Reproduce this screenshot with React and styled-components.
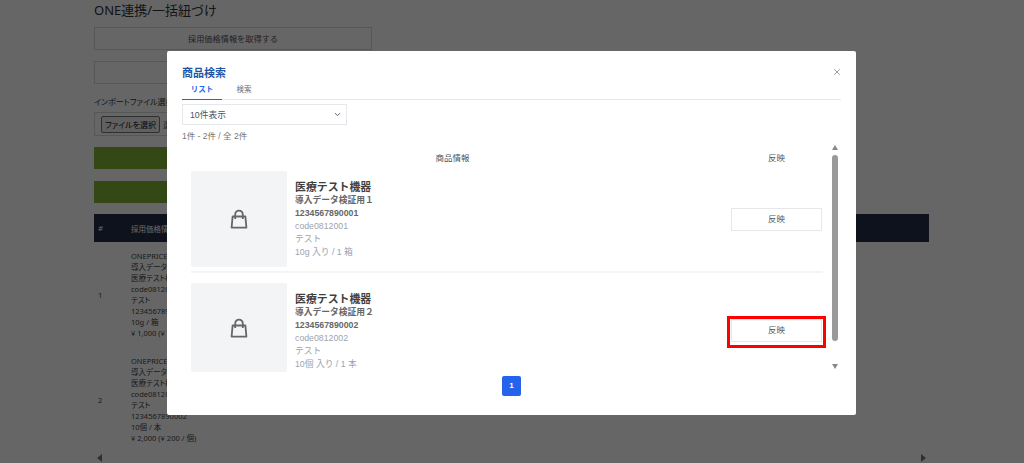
import React from "react";
import styled, { createGlobalStyle } from "styled-components";
import { X, ChevronDown } from "lucide-react";

const Global = createGlobalStyle`
  html, body { margin: 0; padding: 0; height: 463px; overflow: hidden; background: #fff; }
  body { font-family: "Noto Sans", "Noto Sans CJK JP", sans-serif; color: #374151; }
  * { box-sizing: border-box; }
`;

const Page = styled.div`
  width: 1024px;
  height: 463px;
  padding: 0 95px 0 94px;
  overflow: hidden;
`;
const PageTitle = styled.h1`
  margin: 0;
  height: 27px;
  font-size: 13px;
  font-weight: 400;
  line-height: 20px;
  color: #333;
`;
const OutlineBar = styled.div`
  width: 278px;
  height: 23px;
  margin-bottom: 11px;
  border: 1px solid #d9d9d9;
  font-size: 8.2px;
  line-height: 21px;
  text-align: center;
  color: #555;
`;
const ImportLabel = styled.div`
  font-size: 8px;
  line-height: 13px;
  color: #333;
  font-feature-settings: "palt";
`;
const FileBox = styled.div`
  width: 278px;
  height: 24px;
  margin: 4px 0 11px;
  padding: 3px 6px;
  border: 1px solid #d9d9d9;
  display: flex;
  align-items: center;
  gap: 3px;
  font-size: 8px;
  color: #555;
  font-feature-settings: "palt";
`;
const FileButton = styled.span`
  padding: 0 3px;
  height: 17px;
  line-height: 15px;
  border: 1px solid #767676;
  border-radius: 2px;
  background: #efefef;
  color: #111;
  white-space: nowrap;
`;
const GreenGroup = styled.div`
  display: flex;
  flex-direction: column;
  gap: 12px;
  margin-bottom: 11px;
`;
const GreenBar = styled.div`
  width: 278px;
  height: 22px;
  background: #7fb432;
`;
const TableHead = styled.div`
  height: 28px;
  background: #252f46;
  display: flex;
  align-items: center;
  color: #fff;
  font-size: 7.5px;
`;
const HashCell = styled.span`
  width: 37px;
  padding-left: 4px;
  font-style: italic;
`;
const Row = styled.div`
  height: 105px;
  display: flex;
  align-items: center;
  font-size: 7.5px;
  color: #444;
  font-feature-settings: "palt";
`;
const NumCell = styled.span`
  width: 37px;
  padding-left: 4px;
`;
const RowLines = styled.div`
  line-height: 11px;
  white-space: nowrap;
`;
const ScrollRow = styled.div`
  display: flex;
  justify-content: space-between;
  padding: 0 3px;
  margin-top: 2px;
`;
const ArrowLeft = styled.span`
  width: 0;
  height: 0;
  border-style: solid;
  border-width: 4px 5px 4px 0;
  border-color: transparent #777 transparent transparent;
`;
const ArrowRight = styled(ArrowLeft)`
  border-width: 4px 0 4px 5px;
  border-color: transparent transparent transparent #777;
`;

const Overlay = styled.div`
  position: fixed;
  inset: 0;
  background: rgba(0, 0, 0, 0.6);
  padding: 51px 0 0 167px;
`;
const Modal = styled.div`
  position: relative;
  width: 689px;
  height: 364px;
  background: #fff;
  border-radius: 2px;
  padding: 15px 15px 0;
  font-family: "Liberation Sans", "Noto Sans CJK JP", sans-serif;
`;
const ModalTitle = styled.h2`
  margin: 0;
  font-size: 11px;
  line-height: 15px;
  font-weight: 700;
  color: #1e56a8;
`;
const CloseButton = styled.span`
  position: absolute;
  top: 16px;
  right: 14px;
  display: flex;
  color: #888;
`;
const Tabs = styled.div`
  display: flex;
  height: 19px;
  border-bottom: 1px solid #e5e7eb;
`;
const Tab = styled.span`
  width: ${(p) => (p.$active ? "40px" : "44px")};
  height: 19px;
  padding-top: 3px;
  text-align: center;
  font-size: 7.5px;
  line-height: 12px;
  font-weight: ${(p) => (p.$active ? 700 : 400)};
  color: ${(p) => (p.$active ? "#2563eb" : "#6b7280")};
  border-bottom: ${(p) => (p.$active ? "1px solid #2563eb" : "none")};
`;
const SelectBox = styled.div`
  width: 165px;
  height: 21px;
  margin-top: 4px;
  padding: 0 4px 0 7px;
  display: flex;
  align-items: center;
  justify-content: space-between;
  border: 1px solid #e5e7eb;
  font-size: 8.75px;
  color: #4b5563;
`;
const Count = styled.div`
  margin-top: 5px;
  font-size: 8.5px;
  line-height: 12px;
  color: #777;
`;
const ListWrap = styled.div`
  display: flex;
  height: 231px;
`;
const List = styled.div`
  width: 647px;
  overflow: hidden;
`;
const ListHead = styled.div`
  display: flex;
  height: 29px;
  align-items: center;
  font-size: 8.5px;
  color: #4b5563;
`;
const HeadInfo = styled.span`
  width: 541px;
  text-align: center;
`;
const HeadAction = styled.span`
  width: 91px;
  margin-left: 8px;
  text-align: center;
`;
const Item = styled.div`
  display: flex;
  align-items: flex-start;
  margin-left: 9px;
  width: 632px;
  height: ${(p) => p.$h}px;
  padding-top: ${(p) => p.$pt}px;
  border-bottom: ${(p) => (p.$line ? "2px solid #f3f4f6" : "none")};
`;
const Thumb = styled.div`
  width: 96px;
  height: ${(p) => p.$h}px;
  flex: none;
  display: flex;
  align-items: center;
  justify-content: center;
  background: #f3f4f6;
  border-radius: 2px;
  color: #666;
`;
const Info = styled.div`
  flex: 1;
  padding: 10px 0 0 8px;
`;
const ItemName = styled.div`
  font-size: 10.9px;
  line-height: 13px;
  font-weight: 700;
  color: #404040;
`;
const Line = styled.div`
  font-size: 8.75px;
  line-height: 13px;
  font-weight: ${(p) => (p.$bold ? 700 : 400)};
  color: ${(p) => (p.$bold ? "#666" : "#9ca3af")};
`;
const ActionCell = styled.div`
  position: relative;
  width: 91px;
  flex: none;
  margin: ${(p) => p.$mt}px 1px 0 0;
`;
const ReflectButton = styled.div`
  height: 23px;
  border: 1px solid #e5e7eb;
  font-size: 8.5px;
  line-height: 21px;
  text-align: center;
  color: #4b5563;
`;
const Highlight = styled.span`
  position: absolute;
  inset: -3px -4px -6px -4px;
  border: 3px solid #f00;
`;
const ScrollBar = styled.div`
  width: 12px;
  display: flex;
  flex-direction: column;
  align-items: center;
`;
const ScrollUp = styled.span`
  margin-top: 3px;
  width: 0;
  height: 0;
  border-style: solid;
  border-width: 0 3.5px 5px;
  border-color: transparent transparent #888;
`;
const Thumbbar = styled.span`
  width: 6px;
  height: 186px;
  margin-top: 5px;
  border-radius: 3px;
  background: #999;
`;
const ScrollDown = styled.span`
  margin-top: 23px;
  width: 0;
  height: 0;
  border-style: solid;
  border-width: 5px 3.5px 0;
  border-color: #888 transparent transparent;
`;
const Pager = styled.div`
  display: flex;
  justify-content: center;
  margin-top: 3px;
`;
const PageButton = styled.span`
  width: 19px;
  height: 20px;
  border-radius: 2px;
  background: #2563eb;
  color: #fff;
  font-size: 8px;
  font-weight: 700;
  line-height: 20px;
  text-align: center;
`;

const BagIcon = () => (
  <svg width="18" height="20" viewBox="0 0 18 20" fill="none" stroke="currentColor" strokeWidth="1.8" strokeLinejoin="round">
    <path d="M2.6 7.5H15.4L16.4 18.6H1.6Z" />
    <path d="M5.2 10V5.4a3.8 3.8 0 0 1 7.6 0V10" />
  </svg>
);

const rows = [
  { n: 1, lines: ["ONEPRICE", "導入データ検証用１", "医療テスト機器", "code0812001", "テスト", "1234567890001", "10g / 箱", "¥ 1,000 (¥ 100 / g)"] },
  { n: 2, lines: ["ONEPRICE", "導入データ検証用２", "医療テスト機器", "code0812002", "テスト", "1234567890002", "10個 / 本", "¥ 2,000 (¥ 200 / 個)"] },
];

const items = [
  { name: "医療テスト機器", sub: "導入データ検証用１", jan: "1234567890001", code: "code0812001", pack: "10g 入り / 1 箱", h: 102, pt: 0, th: 96, line: true, mt: 37 },
  { name: "医療テスト機器", sub: "導入データ検証用２", jan: "1234567890002", code: "code0812002", pack: "10個 入り / 1 本", h: 100, pt: 10, th: 89, mt: 36 },
];

export default function App() {
  return (
    <>
      <Global />
      <Page>
        <PageTitle>ONE連携/一括紐づけ</PageTitle>
        <OutlineBar>採用価格情報を取得する</OutlineBar>
        <OutlineBar />
        <ImportLabel>インポートファイル選択</ImportLabel>
        <FileBox>
          <FileButton>ファイルを選択</FileButton>
          <span>選択されていません</span>
        </FileBox>
        <GreenGroup>
          <GreenBar />
          <GreenBar />
        </GreenGroup>
        <TableHead>
          <HashCell>#</HashCell>
          <span>採用価格情報</span>
        </TableHead>
        {rows.map((r) => (
          <Row key={r.n}>
            <NumCell>{r.n}</NumCell>
            <RowLines>
              {r.lines.map((l) => (
                <div key={l}>{l}</div>
              ))}
            </RowLines>
          </Row>
        ))}
        <ScrollRow>
          <ArrowLeft />
          <ArrowRight />
        </ScrollRow>
      </Page>
      <Overlay>
        <Modal>
          <ModalTitle>商品検索</ModalTitle>
          <CloseButton>
            <X size={10} />
          </CloseButton>
          <Tabs>
            <Tab $active>リスト</Tab>
            <Tab>検索</Tab>
          </Tabs>
          <SelectBox>
            10件表示
            <ChevronDown size={9} strokeWidth={2.5} />
          </SelectBox>
          <Count>1件 - 2件 / 全 2件</Count>
          <ListWrap>
            <List>
              <ListHead>
                <HeadInfo>商品情報</HeadInfo>
                <HeadAction>反映</HeadAction>
              </ListHead>
              {items.map((it, i) => (
                <Item key={it.jan} $h={it.h} $pt={it.pt} $line={it.line}>
                  <Thumb $h={it.th}>
                    <BagIcon />
                  </Thumb>
                  <Info>
                    <ItemName>{it.name}</ItemName>
                    <Line $bold>{it.sub}</Line>
                    <Line $bold>{it.jan}</Line>
                    <Line>{it.code}</Line>
                    <Line>テスト</Line>
                    <Line>{it.pack}</Line>
                  </Info>
                  <ActionCell $mt={it.mt}>
                    <ReflectButton>反映</ReflectButton>
                    {i === 1 && <Highlight />}
                  </ActionCell>
                </Item>
              ))}
            </List>
            <ScrollBar>
              <ScrollUp />
              <Thumbbar />
              <ScrollDown />
            </ScrollBar>
          </ListWrap>
          <Pager>
            <PageButton>1</PageButton>
          </Pager>
        </Modal>
      </Overlay>
    </>
  );
}
